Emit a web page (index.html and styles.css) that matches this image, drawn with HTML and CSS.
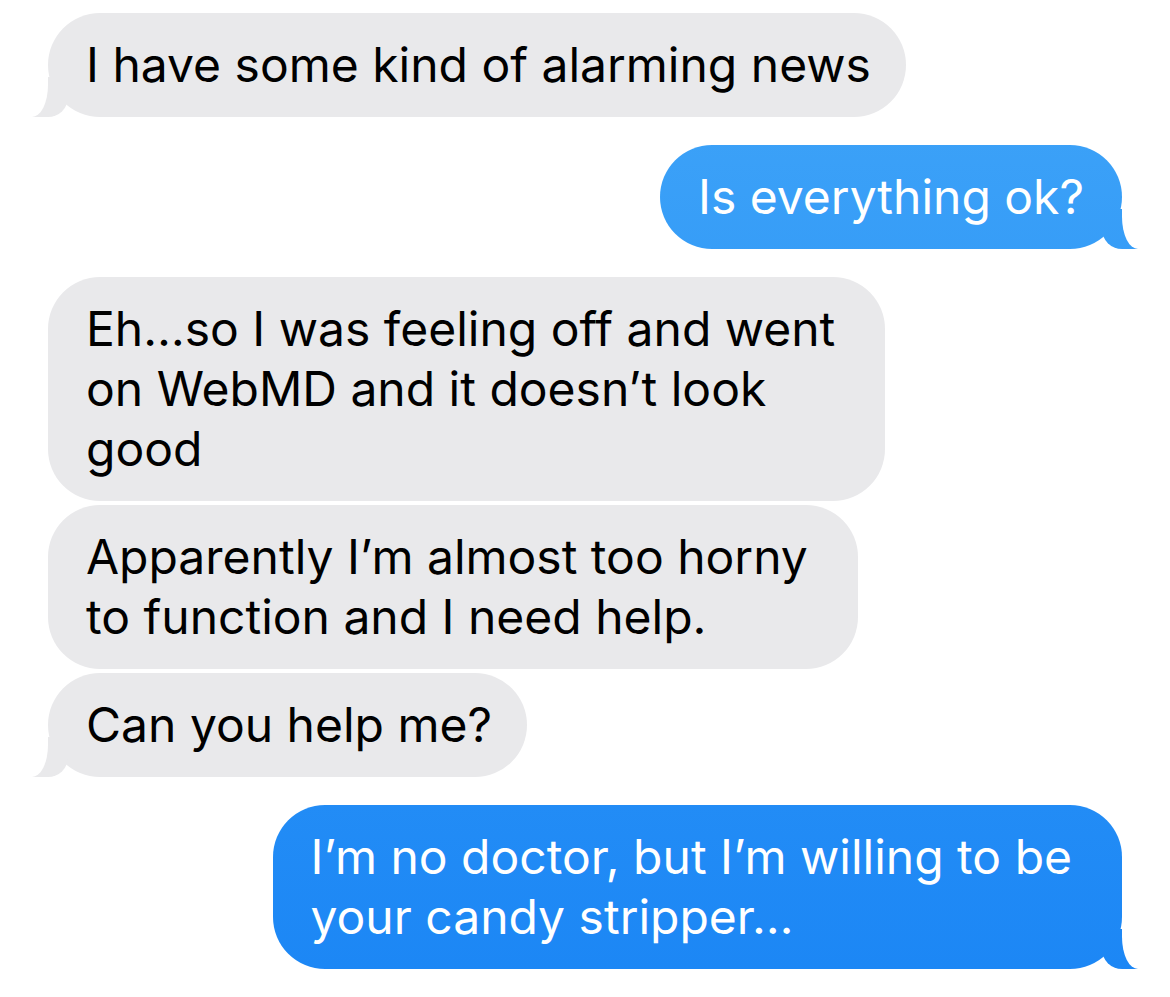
FILE: index.html
```html
<!DOCTYPE html>
<html lang="en">
<head>
    <meta charset="UTF-8">
    <meta name="viewport" content="width=device-width, initial-scale=1.0">
    <title>Messages</title>
    <link rel="stylesheet" href="styles.css">
</head>
<body>
    <div class="thread">
        <div class="bubble them tail">I have some kind of alarming news</div>
        <div class="bubble me tail gap">Is everything ok?</div>
        <div class="bubble them wrap gap">Eh…so I was feeling off and went<br>on WebMD and it doesn’t look<br>good</div>
        <div class="bubble them wrap">Apparently I’m almost too horny<br>to function and I need help.</div>
        <div class="bubble them tail">Can you help me?</div>
        <div class="bubble me wrap tail gap">I’m no doctor, but I’m willing to be<br>your candy stripper…</div>
    </div>
</body>
</html>
```

FILE: styles.css
```css
body {
    margin: 0;
    background: #fff;
    font-family: Inter, "Noto Sans", sans-serif;
}
.thread {
    display: flex;
    flex-direction: column;
    gap: 4px;
    padding: 13px 48px;
}
.bubble {
    position: relative;
    z-index: 0;
    padding: 22px 35px 22px 38px;
    font-size: 48px;
    line-height: 60px;
    border-radius: 52px;
}
.gap {
    margin-top: 24px;
}
.them {
    align-self: flex-start;
    background: #e9e9eb;
    color: #000;
}
.me {
    align-self: flex-end;
    padding-right: 38px;
    color: #fff;
    background: linear-gradient(#40a5f8, #1b86f5) fixed;
}
.bubble.wrap {
    padding-right: 50px;
}
.tail::before,
.tail::after {
    content: "";
    position: absolute;
    z-index: -1;
    bottom: 0;
    height: 40px;
}
.them.tail::before {
    left: -16px;
    width: 36px;
    background: #e9e9eb;
    border-bottom-right-radius: 20px;
}
.them.tail::after {
    left: -40px;
    width: 40px;
    background: #fff;
    border-bottom-right-radius: 16px 32px;
}
.me.tail::before {
    right: -16px;
    width: 36px;
    background: linear-gradient(#40a5f8, #1b86f5) fixed;
    border-bottom-left-radius: 20px;
}
.me.tail::after {
    right: -40px;
    width: 40px;
    background: #fff;
    border-bottom-left-radius: 16px 32px;
}
```
